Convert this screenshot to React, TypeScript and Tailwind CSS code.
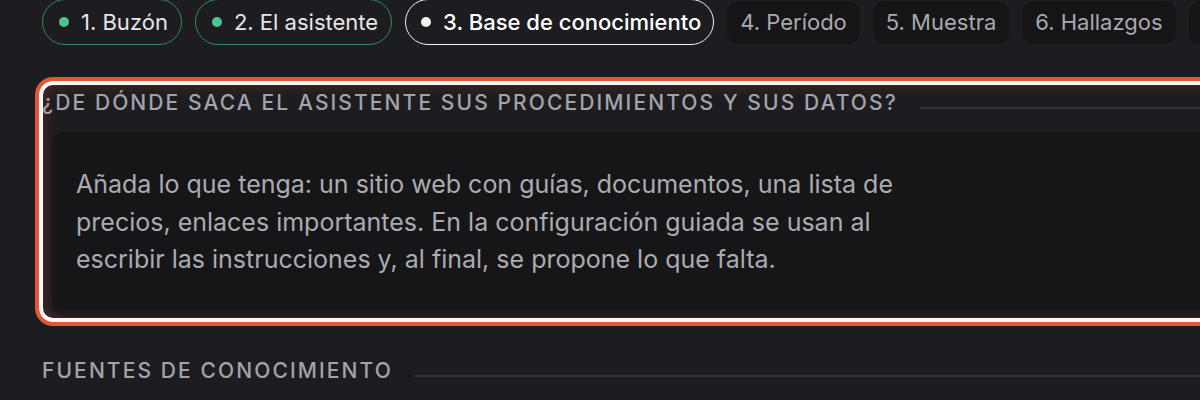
import React from "react";

const font = { fontFamily: "Inter, 'Noto Sans', sans-serif" };

function DonePill({ label }: { label: string }) {
  return (
    <div className="flex h-[46px] shrink-0 items-center gap-3 rounded-full border-[1.5px] border-[#2f8c64] pl-[16px] pr-[13px] text-[22px] text-[#e6e6e8]">
      <span className="h-[10px] w-[10px] rounded-full bg-[#4fc28f]" />
      <span>{label}</span>
    </div>
  );
}

function ActivePill({ label }: { label: string }) {
  return (
    <div className="flex h-[46px] shrink-0 items-center gap-3 rounded-full border-[1.5px] border-[#f2f2f2] pl-[15px] pr-[12px] text-[22px] font-medium text-white">
      <span className="h-[10px] w-[10px] rounded-full bg-[#f2f2f2]" />
      <span>{label}</span>
    </div>
  );
}

function TodoPill({ label }: { label: string }) {
  return (
    <div className="flex h-[43px] shrink-0 items-center rounded-xl bg-[#151517] px-[13px] text-[22px] text-[#a9a9ae]">
      {label}
    </div>
  );
}

function SectionHeading({ children }: { children: React.ReactNode }) {
  return (
    <div className="flex items-center gap-[22px]">
      <span className="shrink-0 text-[21px] font-medium uppercase leading-[26px] tracking-[0.1em] text-[#a3a3a9]">
        {children}
      </span>
      <span className="mt-[10px] h-[2px] flex-1 bg-[#323237]" />
    </div>
  );
}

export default function App() {
  return (
    <div className="h-[400px] w-[1200px] overflow-hidden bg-[#1d1d21]" style={font}>
      <div className="w-[1500px] pl-[42px]">
        <div className="-mt-[1px] flex items-center gap-[13px]">
          <DonePill label="1. Buzón" />
          <DonePill label="2. El asistente" />
          <ActivePill label="3. Base de conocimiento" />
          <TodoPill label="4. Período" />
          <TodoPill label="5. Muestra" />
          <TodoPill label="6. Hallazgos" />
          <TodoPill label="7. Informe" />
        </div>

        <div className="relative mt-[41px]">
          <div className="pt-[4px]">
            <SectionHeading>¿De dónde saca el asistente sus procedimientos y sus datos?</SectionHeading>
          </div>
          <div className="ml-[10px] mt-[16px] rounded-xl bg-[#161618] px-[24px] pb-[38px] pt-[34px]">
            <p className="max-w-[830px] text-[25px] leading-[37.5px] text-[#ababb0]">
              Añada lo que tenga: un sitio web con guías, documentos, una lista de precios, enlaces
              importantes. En la configuración guiada se usan al escribir las instrucciones y, al
              final, se propone lo que falta.
            </p>
          </div>
          <div className="pointer-events-none absolute -bottom-[9px] -left-[7px] -right-[8px] -top-[9px] rounded-[18px] border-4 border-[#e4553a]">
            <div className="h-full w-full rounded-[14px] border-4 border-[#fbf7f4] shadow-[inset_0_0_14px_rgba(228,85,58,0.28)]" />
          </div>
        </div>

        <div className="mt-[41px]">
          <SectionHeading>Fuentes de conocimiento</SectionHeading>
        </div>
      </div>
    </div>
  );
}
